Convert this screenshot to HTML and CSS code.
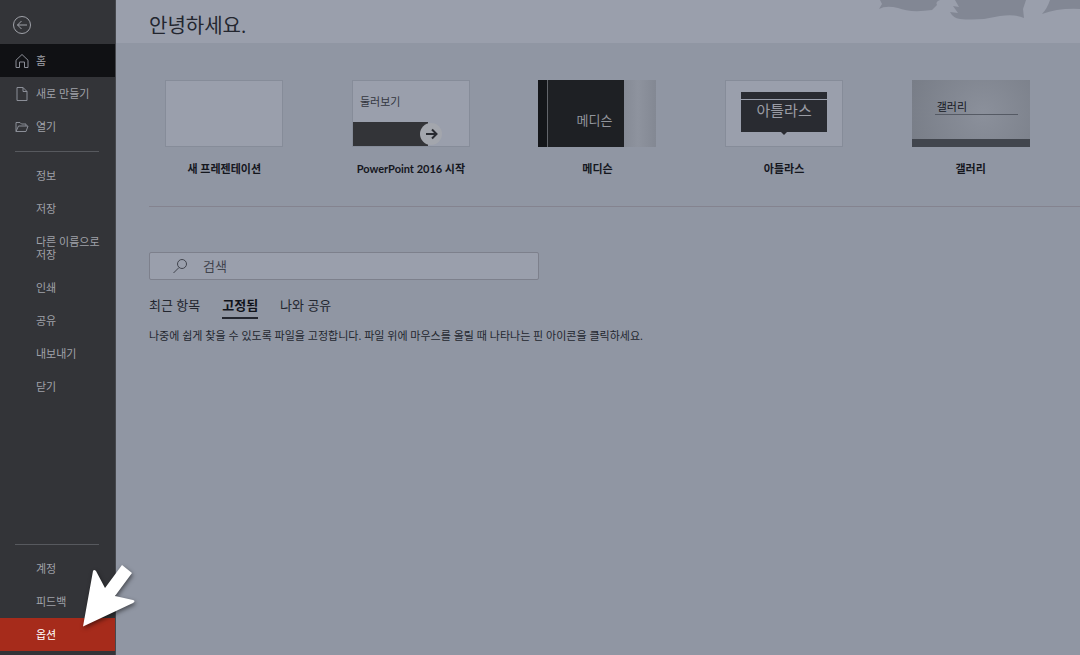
FILE: index.html
```
<!DOCTYPE html>
<html lang="ko">
<head>
  <meta charset="UTF-8">
  <title>PowerPoint</title>
  <meta name="viewport" content="width=device-width, initial-scale=1.0">
  <link rel="stylesheet" href="styles.css">
</head>
<body>

<nav class="sidebar">
  <button class="back" aria-label="뒤로">
    <svg width="20" height="20" viewBox="0 0 20 20"><circle cx="10" cy="10" r="8.500"/><path d="M15 10H5.500M9.500 6L5.500 10l4 4"/></svg>
  </button>

  <a href="#" class="item home">
    <svg width="16" height="16" viewBox="0 0 16 16"><path d="M2 7.200L8 1.500l6 5.700V14.500h-3.500V9h-5v5.500H2z"/></svg>
    홈
  </a>
  <a href="#" class="item">
    <svg width="16" height="16" viewBox="0 0 16 16"><path d="M3 1.500h6l4 4v9H3zM9 1.500v4h4"/></svg>
    새로 만들기
  </a>
  <a href="#" class="item">
    <svg width="16" height="16" viewBox="0 0 16 16"><path d="M2 12.500V3.500h4l1.500 1.500H12v2M2 12.500L4.500 7h9.500l-2 5.500z"/></svg>
    열기
  </a>

  <hr>

  <a href="#" class="item text">정보</a>
  <a href="#" class="item text">저장</a>
  <a href="#" class="item text">다른 이름으로 저장</a>
  <a href="#" class="item text">인쇄</a>
  <a href="#" class="item text">공유</a>
  <a href="#" class="item text">내보내기</a>
  <a href="#" class="item text">닫기</a>

  <div class="bottom">
    <hr>
    <a href="#" class="item text">계정</a>
    <a href="#" class="item text">피드백</a>
    <a href="#" class="item text options">옵션</a>
    <svg class="pointer" width="60" height="70" viewBox="0 0 60 70"><path d="M3 65.500L13 10q1-2 3 0l9 17L42 4l10 8-17 23 18 4q3 1 0 3z"/></svg>
  </div>
</nav>

<main>
  <header>
    <h1>안녕하세요.</h1>
    <svg class="clouds" width="220" height="43" viewBox="0 0 220 43">
      <path d="M20 0h60q-5 2-3 5l-5 5q-22 3-34-2-12-3-19 1l3-5z"/>
      <path d="M95 0h71l-3 9 1 9q-8-4-24-2-20 5-40 3-7-1-10-7l8 1-5-7 6 1z"/>
      <path d="M190 0h30v9q-22-1-38 5 5-5 8-14z"/>
    </svg>
  </header>

  <section class="templates">
    <a href="#" class="template">
      <span class="thumb"></span>
      새 프레젠테이션
    </a>
    <a href="#" class="template">
      <span class="thumb tour">
        <span>둘러보기</span>
        <svg width="116" height="24" viewBox="0 0 116 24"><path fill="#333438" d="M0 0h75v24H0z"/><circle cx="78" cy="12" r="11" fill="#a3a6ad"/><path d="M73 12h10M79 7.500l4.500 4.500-4.500 4.500" fill="none" stroke="#292b31" stroke-width="2"/></svg>
      </span>
      PowerPoint 2016 시작
    </a>
    <a href="#" class="template">
      <span class="thumb medison"><span>메디슨</span></span>
      메디슨
    </a>
    <a href="#" class="template">
      <span class="thumb atlas"><span>아틀라스</span></span>
      아틀라스
    </a>
    <a href="#" class="template">
      <span class="thumb gallery"><span>갤러리</span></span>
      갤러리
    </a>
  </section>

  <section class="files">
    <label class="search">
      <svg width="16" height="16" viewBox="0 0 16 16"><circle cx="10" cy="6" r="4.500"/><path d="M7 9.500L1.500 15"/></svg>
      <input type="text" placeholder="검색" aria-label="검색">
    </label>
    <div class="tabs">
      <button>최근 항목</button>
      <button class="active">고정됨</button>
      <button>나와 공유</button>
    </div>
    <p>나중에 쉽게 찾을 수 있도록 파일을 고정합니다. 파일 위에 마우스를 올릴 때 나타나는 핀 아이콘을 클릭하세요.</p>
  </section>
</main>

</body>
</html>
```
FILE: styles.css
```
:root {
  --bg: #9096a3;
  --light: #9a9fac;
  --dark: #333438;
  --text: #23262f;
}

* {
  box-sizing: border-box;
}

body {
  margin: 0;
  display: flex;
  min-height: 100vh;
  font-family: "Open Sans", "Noto Sans CJK KR", sans-serif;
  font-size: 11px;
  color: var(--text);
  background: var(--bg);
}

a {
  color: inherit;
  text-decoration: none;
}

button {
  font: inherit;
  color: inherit;
  background: none;
  border: none;
  padding: 0;
  cursor: pointer;
}

svg {
  fill: none;
  stroke: currentColor;
}

/* sidebar */
.sidebar {
  display: flex;
  flex-direction: column;
  flex-shrink: 0;
  width: 116px;
  padding-bottom: 4px;
  color: #a0a2a9;
  background: var(--dark);
  border-right: 1px solid #46484d;
}

.back {
  height: 44px;
  padding: 5px 12px 0;
  text-align: left;
}

.back svg {
  display: block;
}

.item {
  display: flex;
  align-items: center;
  gap: 6px;
  padding: 10px 14px;
  line-height: 13px;
}

.item svg {
  flex-shrink: 0;
  margin: -2px 0;
  color: #8b8e97;
}

.item.text {
  padding-left: 36px;
}

.item.home {
  background: #101114;
}

.sidebar hr {
  width: 84px;
  margin: 8px 0 7px 15px;
  border: none;
  border-top: 1px solid #57595e;
}

.bottom {
  position: relative;
  margin-top: auto;
}

.item.options {
  color: #fff;
  background: #a62b1b;
}

.pointer {
  position: absolute;
  left: 80px;
  bottom: 20px;
  fill: #fff;
  stroke: none;
  filter: drop-shadow(1px 2px 2px rgba(0, 0, 0, 0.5));
}

/* main */
main {
  flex: 1;
  min-width: 0;
}

header {
  display: flex;
  justify-content: space-between;
  height: 43px;
  padding-left: 33px;
  background: var(--light);
}

h1 {
  margin: 0;
  font-size: 20px;
  font-weight: normal;
  line-height: 51px;
}

.clouds {
  fill: #828794;
  stroke: none;
}

.templates {
  display: grid;
  grid-template-columns: repeat(5, 1fr);
  padding: 37px 16px 29px 15px;
}

.template {
  display: flex;
  flex-direction: column;
  align-items: center;
  gap: 13px;
  font-family: Lato, "Noto Sans CJK KR", sans-serif;
  font-weight: bold;
  line-height: 17px;
  color: #15171e;
}

.thumb {
  display: flex;
  width: 118px;
  height: 67px;
  font-weight: normal;
  background: var(--light);
  border: 1px solid #868c99;
}

.tour {
  flex-direction: column;
  justify-content: space-between;
}

.tour span {
  padding: 12px 7px 0;
  color: #33363f;
}

.tour svg {
  display: block;
  stroke: none;
}

.medison {
  align-items: center;
  padding: 14px 0 0 38px;
  border: none;
  font-size: 13px;
  color: #92959c;
  background: linear-gradient(90deg, #14161a 9px, #62656b 9px, #62656b 10px, #1e2024 10px, #1e2024 86px, #858a95 86px, #8e939e 100px, #838893);
}

.atlas {
  justify-content: center;
  padding: 11px 15px 14px;
}

.atlas span {
  position: relative;
  flex: 1;
  padding-top: 8px;
  font-size: 15px;
  line-height: 20px;
  text-align: center;
  color: #9a9ca4;
  background: linear-gradient(#292b31 7px, #9a9fac 7px, #9a9fac 8px, #292b31 8px);
}

.atlas span::after {
  content: "";
  position: absolute;
  top: 100%;
  left: 50%;
  margin-left: -3px;
  border: 3px solid transparent;
  border-top-color: #292b31;
}

.gallery {
  padding: 17px 12px 0 23px;
  border: none;
  color: #15171e;
  background: linear-gradient(transparent 59px, #42464e 59px), radial-gradient(circle at 60% 50%, #8b909b, #787d87);
}

.gallery span {
  flex: 1;
  height: 18px;
  padding-left: 2px;
  line-height: 20px;
  border-bottom: 1px solid #555a64;
}

.files {
  margin-left: 33px;
  padding-top: 45px;
  border-top: 1px solid #84838f;
}

.search {
  display: flex;
  align-items: center;
  gap: 15px;
  width: 390px;
  height: 28px;
  padding-left: 22px;
  background: var(--light);
  border: 1px solid #7d808c;
  border-radius: 2px;
}

.search svg {
  color: #41444d;
}

.search input {
  flex: 1;
  padding: 0;
  font: inherit;
  font-size: 13px;
  background: none;
  border: none;
  outline: none;
}

.search input::placeholder {
  color: #41444d;
}

.tabs {
  display: flex;
  gap: 22px;
  margin-top: 12px;
  font-size: 13px;
}

.tabs button {
  height: 27px;
  line-height: 24px;
  border-bottom: 2px solid transparent;
}

.tabs .active {
  font-weight: bold;
  color: #101219;
  border-color: var(--text);
}

.files p {
  margin: 8px 0;
  line-height: 18px;
}
```
